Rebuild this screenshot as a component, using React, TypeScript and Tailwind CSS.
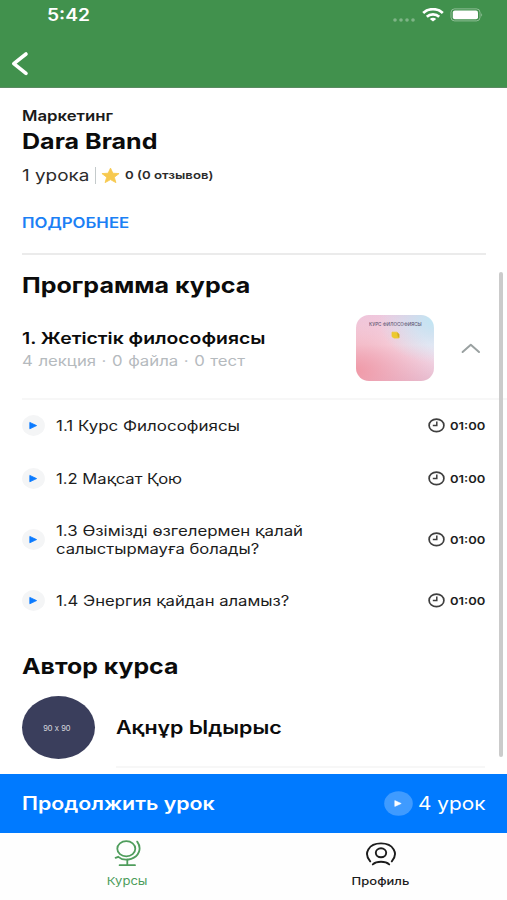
import { ReactNode } from 'react';

type TextProps = {
    className: string;
    children: ReactNode;
};

type Lesson = {
    lines: { text: string; stretch: string }[];
    height: string;
    duration: string;
};

const lessons: Lesson[] = [
    { lines: [{ text: '1.1 Курс Философиясы', stretch: 'scale-x-[1.21]' }], height: 'h-[53px]', duration: '01:00' },
    { lines: [{ text: '1.2 Мақсат Қою', stretch: 'scale-x-[1.187]' }], height: 'h-[53px]', duration: '01:00' },
    {
        lines: [
            { text: '1.3 Өзімізді өзгелермен қалай', stretch: 'scale-x-[1.203]' },
            { text: 'салыстырмауға болады?', stretch: 'scale-x-[1.187]' },
        ],
        height: 'h-[69px]',
        duration: '01:00',
    },
    { lines: [{ text: '1.4 Энергия қайдан аламыз?', stretch: 'scale-x-[1.19]' }], height: 'h-[53px]', duration: '01:00' },
];

const Text = ({ className, children }: TextProps) => (
    <span className={`block w-max origin-left whitespace-nowrap ${className}`}>{children}</span>
);

const StatusBar = () => (
    <div className="flex h-[30px] items-center pl-[47px] pr-[23px] text-white">
        <Text className="pt-[2px] text-[17px] font-semibold scale-x-[1.13]">5:42</Text>
        <div className="ml-auto flex items-center">
            <svg width="24" height="6" viewBox="0 0 24 6" className="mt-[9px]" fill="#fff" fillOpacity="0.33">
                <circle cx="3" cy="3" r="1.8" />
                <circle cx="9" cy="3" r="1.8" />
                <circle cx="15" cy="3" r="1.8" />
                <circle cx="21" cy="3" r="1.8" />
            </svg>
            <svg width="22" height="14" viewBox="0 0 22 14" className="ml-[6px]" fill="none" stroke="#fff" strokeWidth="2.7">
                <path d="M1.2 5 C6.5 -0.1 15.5 -0.1 20.8 5" />
                <path d="M4.8 8.7 C8.2 5.6 13.8 5.6 17.2 8.7" />
                <path d="M7.8 11 C9.6 9.4 12.4 9.4 14.2 11 L11 13.4 Z" fill="#fff" stroke="none" />
            </svg>
            <svg width="34" height="14" viewBox="0 0 34 14" className="ml-[6px]">
                <rect x="1" y="0.9" width="29" height="12" rx="3.5" fill="none" stroke="#fff" strokeOpacity="0.4" />
                <rect x="2.8" y="2.5" width="25.2" height="8.8" rx="2" fill="#fff" />
                <path d="M31.3 5 q1.8 1.9 0 3.8z" fill="#fff" fillOpacity="0.5" />
            </svg>
        </div>
    </div>
);

const Header = () => (
    <header className="h-[88px] shrink-0 border-b border-[#5a8a62] bg-[#41914d]">
        <StatusBar />
        <svg width="18" height="26" viewBox="0 0 18 26" className="ml-[11px] mt-[21px]" fill="none" stroke="#fff" strokeWidth="3.6" strokeLinecap="round" strokeLinejoin="round">
            <path d="M15 3 L2.8 12.7 L15 22.4" />
        </svg>
    </header>
);

const Clock = () => (
    <svg width="17" height="15" viewBox="0 0 17 15" fill="none" stroke="#3f3f3f">
        <ellipse cx="8.5" cy="7.4" rx="7.4" ry="6.3" strokeWidth="1.7" />
        <path d="M8.8 3.6 V7.6 H4.8" strokeWidth="1.5" />
    </svg>
);

const LessonRow = ({ lesson }: { lesson: Lesson }) => (
    <li className={`flex items-center pl-[22px] pr-[21px] ${lesson.height}`}>
        <svg width="23" height="21" viewBox="0 0 23 21" className="mr-[11px] shrink-0">
            <ellipse cx="11.5" cy="10.5" rx="11.4" ry="10.4" fill="#f4f5f6" />
            <path d="M7.8 7.4 L14.6 10.6 L7.8 13.8 Z" fill="#0a7aff" stroke="#0a7aff" strokeWidth="0.8" strokeLinejoin="round" />
        </svg>
        <div className="text-sm leading-[18px] text-[#1c1c1c]">
            {lesson.lines.map(({ text, stretch }) => (
                <Text key={text} className={stretch}>{text}</Text>
            ))}
        </div>
        <div className="ml-auto flex items-center gap-[5px]">
            <Clock />
            <div className="w-[36px] pt-px text-[11px] font-semibold text-[#1c1c1c]">
                <Text className="scale-x-[1.18]">{lesson.duration}</Text>
            </div>
        </div>
    </li>
);

const Thumbnail = () => (
    <div className="flex h-[66px] w-[78px] flex-col items-center rounded-[13px] bg-[radial-gradient(ellipse_at_100%_8%,#c0e6f4_0%,#c0e6f400_50%),radial-gradient(ellipse_at_0%_85%,#f09aa8_0%,#f3a8b600_75%),linear-gradient(180deg,#efc8de_0%,#f8e8f3_45%,#f3d9e8_65%,#e6bfd3_100%)]">
        <div className="mt-[5px] flex h-[8px] w-[52px] items-center">
            <span className="block h-[10px] w-0 origin-left scale-[0.46] whitespace-nowrap text-[10px] font-medium leading-none text-[#5c5570]">КУРС ФИЛОСОФИЯСЫ</span>
        </div>
        <svg width="9" height="8" viewBox="0 0 9 8" className="mt-[3px]">
            <path d="M1 1.2 H5.6 L7.8 3.2 V7 H3 L1 5.6 Z" fill="#ecc92f" stroke="#ecc92f" strokeWidth="0.8" strokeLinejoin="round" />
            <path d="M6 1 L8.3 3.2 V7 L6.8 5.8 Z" fill="#d3ab22" />
        </svg>
    </div>
);

const Course = () => (
    <main className="relative flex-1 overflow-hidden bg-white pt-[18px] text-[#0b0b0b]">
        <div className="px-[22px]">
            <Text className="text-sm font-semibold leading-5 text-[#1a1a1a] scale-x-[1.197]">Маркетинг</Text>
            <Text className="-mt-px text-[22px] font-bold leading-8 scale-x-[1.14]">Dara Brand</Text>
            <div className="flex h-9 items-center">
                <div className="w-[73px] text-base text-[#2b2b2b]">
                    <Text className="scale-x-[1.18]">1 урока</Text>
                </div>
                <div className="h-[17px] w-px bg-[#c4cacb]" />
                <svg width="19" height="17" viewBox="0 0 24 24" preserveAspectRatio="none" className="ml-[5px] mr-[5px]" fill="#f7c94f">
                    <path d="M12 1.6 L15 8.8 L22.8 9.3 L16.8 14.4 L18.8 22 L12 17.8 L5.2 22 L7.2 14.4 L1.2 9.3 L9 8.8 Z" stroke="#f7c94f" strokeWidth="1.2" strokeLinejoin="round" />
                </svg>
                <Text className="text-[11px] font-semibold text-[#2b2b2b] scale-x-[1.2]">0 (0 отзывов)</Text>
            </div>
            <Text className="mt-5 text-sm font-semibold leading-5 text-[#1b80f5] scale-x-[1.2]">ПОДРОБНЕЕ</Text>
            <div className="mt-[20px] h-[2px] w-[464px] bg-[#ebebeb]" />
            <Text className="mt-[14px] text-[22px] font-bold leading-8 scale-x-[1.138]">Программа курса</Text>
            <div className="flex h-[94px] items-center">
                <div className="w-[334px] pt-[2px]">
                    <Text className="text-base font-semibold leading-6 scale-x-[1.21]">1. Жетістік философиясы</Text>
                    <Text className="text-sm leading-[22px] text-[#b5babe] scale-x-[1.197] [word-spacing:0.7px]">4 лекция · 0 файла · 0 тест</Text>
                </div>
                <Thumbnail />
                <svg width="20" height="11" viewBox="0 0 20 11" className="ml-[27px]" fill="none" stroke="#9aa1a1" strokeWidth="2" strokeLinecap="round" strokeLinejoin="round">
                    <path d="M1.6 9 L9.8 1.8 L18 9" />
                </svg>
            </div>
        </div>
        <div className="ml-[22px] mt-[3px] h-[2px] bg-[#f7f7f7]" />
        <ul className="-mt-px">
            {lessons.map((lesson) => (
                <LessonRow key={lesson.lines[0].text} lesson={lesson} />
            ))}
        </ul>
        <div className="px-[22px]">
            <Text className="mt-[23px] text-[22px] font-bold leading-8 scale-x-[1.13]">Автор курса</Text>
            <div className="mt-[14px] flex h-[63px] items-center">
                <div className="flex h-[63px] w-[73px] items-center justify-center rounded-[50%] bg-[#3a3e5c] pr-1 pt-[3px]">
                    <span className="block font-['Liberation_Sans',sans-serif] text-[9px] text-[#d7d8de] scale-x-[0.92]">90 x 90</span>
                </div>
                <Text className="ml-[21px] text-lg font-semibold scale-x-[1.19]">Ақнұр Ыдырыс</Text>
            </div>
            <div className="ml-[94px] mt-[7px] h-[2px] bg-[#f7f7f7]" />
        </div>
        <div className="absolute right-[4px] top-[184px] h-[485px] w-[4px] rounded-full bg-[#cbcbcb]" />
    </main>
);

const ContinueBar = () => (
    <div className="flex h-[59px] shrink-0 items-center bg-[#007aff] pl-[22px] text-lg text-white">
        <Text className="font-semibold scale-x-[1.187]">Продолжить урок</Text>
        <div className="ml-auto flex items-center">
            <svg width="29" height="25" viewBox="0 0 29 25" className="mr-[5px]">
                <ellipse cx="14.5" cy="12.5" rx="14.3" ry="12.2" fill="#3f9bff" />
                <path d="M10.8 9.6 L17.2 12.5 L10.8 15.4 Z" fill="#fff" stroke="#fff" strokeWidth="0.6" strokeLinejoin="round" />
            </svg>
            <div className="w-[89px]">
                <Text className="scale-x-[1.155]">4 урок</Text>
            </div>
        </div>
    </div>
);

const TabBar = () => (
    <nav className="grid h-[67px] shrink-0 grid-cols-2 bg-[#fefefe] text-[11px]">
        <div className="flex flex-col items-center text-[#4f9d5c]">
            <svg width="28" height="28" viewBox="0 0 28 28" className="mt-[6px]" fill="none" stroke="currentColor" strokeWidth="1.8" strokeLinecap="round">
                <ellipse cx="13.3" cy="9.7" rx="9" ry="7.6" />
                <path d="M24.2 2.6 C29.2 9.4 25.8 17.6 18.2 19.8 C12.8 21.4 8 20.2 5.3 17.8 L2.6 18.8" />
                <path d="M14.3 20.6 V26 M6.6 26.2 H22" />
            </svg>
            <span className="mt-[6px] block leading-4 scale-x-[1.19]">Курсы</span>
        </div>
        <div className="flex flex-col items-center text-[#1c1c1c]">
            <svg width="32" height="26" viewBox="0 0 32 26" className="ml-[2px] mt-[8px]" fill="none" stroke="currentColor" strokeWidth="1.9" strokeLinecap="round">
                <path d="M5.2 20.4 C-1.8 12.4 3.6 2.4 16 2.4 C28.4 2.4 33.8 12.4 26.8 20.4" />
                <ellipse cx="16" cy="11.8" rx="5.2" ry="4.5" />
                <path d="M7.8 23.4 C11.6 19.9 20.4 19.9 24.2 23.4" />
            </svg>
            <span className="mt-[6px] block font-medium leading-4 scale-x-[1.18]">Профиль</span>
        </div>
    </nav>
);

const App = () => (
    <div className="flex h-[900px] w-[507px] flex-col overflow-hidden bg-white font-['Inter',sans-serif]">
        <Header />
        <Course />
        <ContinueBar />
        <TabBar />
    </div>
);

export default App;
